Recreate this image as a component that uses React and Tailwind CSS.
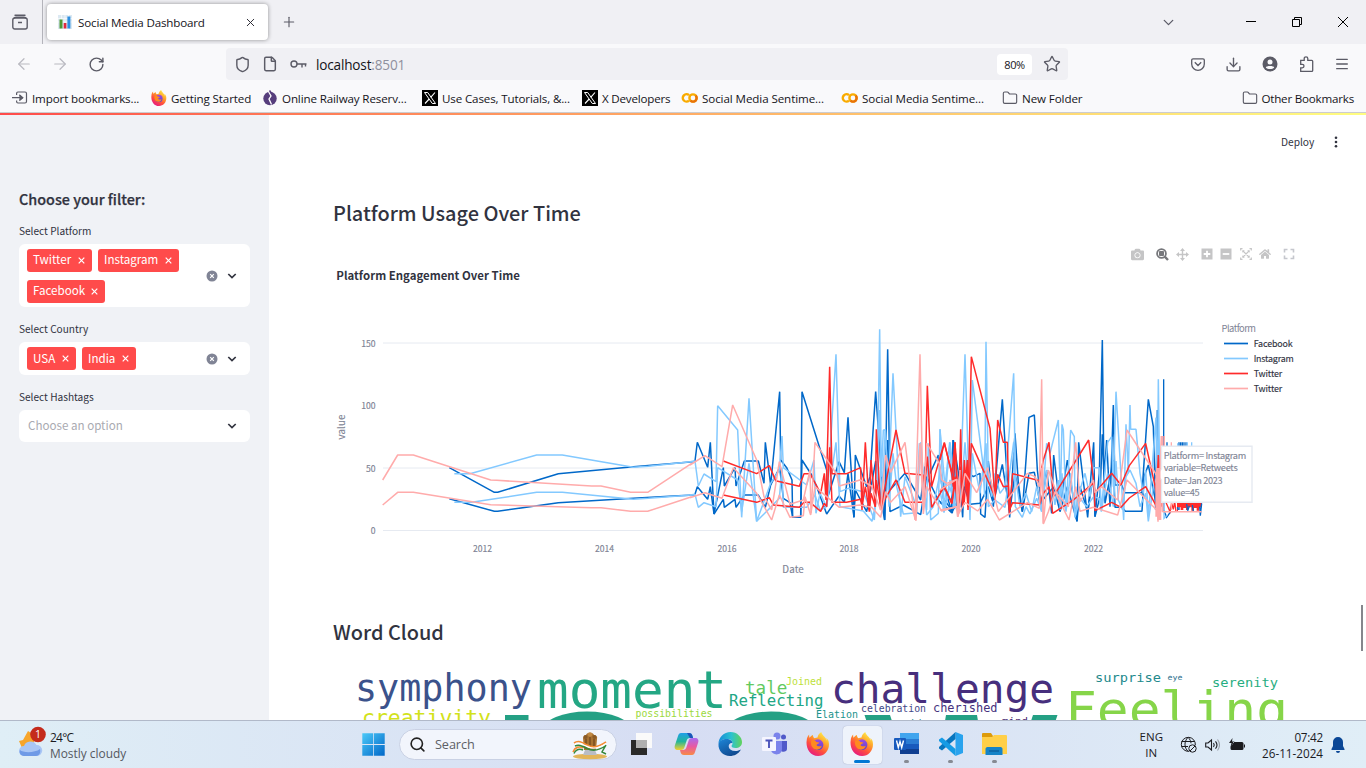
import React from "react";
import { Shield, File, Star, ChevronDown, ArrowLeft, ArrowRight, RotateCw, Plus, X, Folder, Menu, Download, Search } from "lucide-react";
import { FaCamera, FaHome } from "react-icons/fa";

const ui = "font-['Open_Sans','Noto_Sans',sans-serif]";
const st = "font-['Noto_Sans_CJK_SC','Source_Sans_3',sans-serif]";

function Firefox({ size }) {
  return (
    <svg width={size} height={size} viewBox="0 0 24 24" className="shrink-0">
      <defs>
        <linearGradient id="ffBody" x1="0.85" y1="0.05" x2="0.25" y2="1">
          <stop offset="0" stopColor="#fff44f" />
          <stop offset="0.35" stopColor="#ffa329" />
          <stop offset="0.65" stopColor="#ff4f3d" />
          <stop offset="1" stopColor="#e31587" />
        </linearGradient>
        <linearGradient id="ffCore" x1="0.5" y1="0" x2="0.5" y2="1">
          <stop offset="0" stopColor="#a04be0" />
          <stop offset="1" stopColor="#5a45c8" />
        </linearGradient>
      </defs>
      <path fill="url(#ffBody)" d="M22.6 9.2c-.5-1.300-1.600-2.700-2.400-3.100.7 1.300.9 2.200 1 3-1.300-3.300-3.600-4.600-5.400-7.500C15.500 1 15.400.500 15.300 0c-2.300 1.300-3.500 3.600-3.800 5.500-1 .1-2 .4-2.900.8C7.500 5.500 7 4.200 6.900 2.900 5.400 3.600 4.300 4.900 3.600 5.700c-.5-.7-.5-2.800-.4-3.300C1.600 3.800.8 6.100.7 8.400-.4 15 3.300 24 12.200 24 19 24 24.500 17.500 22.600 9.200z" />
      <circle cx="12" cy="12.700" r="5.400" fill="url(#ffCore)" />
      <path fill="#ff8a1f" d="M5.500 8.500c2.200-.9 4.200.3 4.800 1.400l3 .5c-.1 1.300-2.300 1.500-2.700 2.500.4 1.700 3.200 1.800 5.200.9-1 3.400-4.200 4.500-6.700 3.500C5.800 16 4.100 11.800 5.500 8.500z" />
    </svg>
  );
}

function XLogo() {
  return (
    <svg width="16" height="16" viewBox="0 0 16 16" className="shrink-0">
      <rect width="16" height="16" fill="#000" />
      <path d="M2.500 2.500h3.200l7.800 11h-3.200z" fill="none" stroke="#fff" strokeWidth="1" />
      <path d="M13 2.500 8.700 7.400M7.200 9 3 13.500" stroke="#fff" strokeWidth="1.100" />
    </svg>
  );
}

function Colab() {
  return (
    <svg width="17" height="12" viewBox="0 0 17 12" className="shrink-0">
      <path d="M8 3.200A3.700 3.700 0 1 0 8 8.600" fill="none" stroke="#f9ab00" strokeWidth="2.400" />
      <circle cx="12" cy="6" r="3.600" fill="none" stroke="#f9ab00" strokeWidth="2.400" />
      <path d="M9.500 8.600A3.600 3.600 0 0 0 14.600 3.500" fill="none" stroke="#e8710a" strokeWidth="2.400" />
    </svg>
  );
}

function ImportIcon() {
  return (
    <svg width="16" height="14" viewBox="0 0 16 14" fill="none" stroke="#5b5b66" strokeWidth="1.200" className="shrink-0">
      <path d="M4.600 4V2.500A1.500 1.500 0 0 1 6 1h7a1.500 1.500 0 0 1 1.500 1.500v8A1.500 1.500 0 0 1 13 12H6a1.500 1.500 0 0 1-1.400-1.500V9.500M0 6.700h10M7.500 4l3 2.700-3 2.700" />
      <path d="M8 4.500v4.400l2.700-2.200z" fill="#5b5b66" />
    </svg>
  );
}

function Railway() {
  return (
    <svg width="14" height="16" viewBox="0 0 14 16" className="shrink-0">
      <ellipse cx="7" cy="8.500" rx="6.700" ry="6.800" fill="#563d7c" />
      <path d="M5.500 1.500 8 6 6 9l2.500 5.500" stroke="#fff" strokeWidth="1.300" fill="none" />
      <path d="M6.500.500 8.700 3.500" stroke="#563d7c" strokeWidth="1.500" />
    </svg>
  );
}

function Bookmark({ icon, text, cls }) {
  return (
    <div className={"flex items-center gap-[4px] text-[11.600px] text-[#15141a] whitespace-nowrap " + cls}>
      {icon}
      <span>{text}</span>
    </div>
  );
}

const folderIcon = <Folder size={16} strokeWidth={1.7} color="#5b5b66" className="shrink-0" />;

function Chrome() {
  return (
    <header className={"text-[#15141a] " + ui}>
      <div className="flex h-11 items-center bg-[#f0f0f4]">
        <div className="flex h-11 w-[43px] items-center border-r border-[#b4b4bb] pl-3">
          <svg width="16" height="16" viewBox="0 0 16 16" fill="none" stroke="#5b5b66" strokeWidth="1.400">
            <path d="M3 1.200h10" strokeLinecap="round" />
            <rect x=".8" y="4" width="14.400" height="11" rx="2" />
            <path d="M2 4.500C2.300 3.400 3 3.200 4 3.200h8c1 0 1.700.2 2 1.300M6 8.500h4" />
          </svg>
        </div>
        <div className="ml-1 flex h-9 w-[221px] items-center rounded bg-white pl-[11px] shadow-[0_0_4px_rgba(0,0,0,0.4)]">
          <svg width="14" height="14" viewBox="0 0 14 14">
            <rect width="14" height="14" fill="#dce9f2" />
            <path d="M0 3.500h14M0 7h14M3.500 0v14M7 0v14M10.500 0v14" stroke="#fff" strokeWidth=".6" />
            <rect x="1.500" y="4.500" width="3" height="9" fill="#4f9a35" />
            <rect x="5.700" y="8" width="2.700" height="5.500" fill="#e0283c" />
            <rect x="9.400" y="1.500" width="3" height="12" fill="#2c8ee0" />
          </svg>
          <span className="mt-[2px] ml-[6px] w-[166px] text-[11.600px] tracking-[-0.170px]">Social Media Dashboard</span>
          <X size={13} strokeWidth={1.800} color="#2b2a33" />
        </div>
        <Plus size={16} strokeWidth={1.700} color="#5b5b66" className="ml-[13px]" />
        <ChevronDown size={17} strokeWidth={1.800} color="#5b5b66" className="ml-auto" />
        <svg width="10" height="10" viewBox="0 0 10 10" className="ml-[69px]"><path d="M0 4.500h10" stroke="#000" /></svg>
        <svg width="10" height="10" viewBox="0 0 10 10" className="ml-[36px]" fill="none" stroke="#000"><path d="M.5 2.500h7v7h-7zM2.500 2.500v-2h7v7h-2" /></svg>
        <svg width="10" height="10" viewBox="0 0 10 10" className="mr-[18px] ml-[36px]" stroke="#000"><path d="M0 0l10 10M10 0L0 10" /></svg>
      </div>
      <div className="flex h-10 items-center bg-[#f9f9fb]">
        <ArrowLeft size={18} strokeWidth={1.600} color="#b9b9c0" className="ml-[15px]" />
        <ArrowRight size={18} strokeWidth={1.600} color="#b9b9c0" className="ml-[18px]" />
        <RotateCw size={17} strokeWidth={2} color="#5b5b66" className="ml-[19px]" />
        <div className="ml-[121px] flex h-8 w-[842px] items-center rounded bg-[#f0f0f4]">
          <Shield size={17} strokeWidth={2} color="#5b5b66" className="ml-[8px]" />
          <File size={16} strokeWidth={2.200} color="#5b5b66" className="ml-[11px]" />
          <svg width="17" height="10" viewBox="0 0 17 10" fill="none" stroke="#5b5b66" strokeWidth="1.400" className="ml-[12px]">
            <circle cx="4" cy="5" r="3" /><path d="M7 5h9.500M12 5v3.500M15.500 5v2.500" />
          </svg>
          <span className="mt-[2px] ml-[9px] text-[13.600px] tracking-[-0.180px]">localhost<span className="text-[#8f8f9d]">:8501</span></span>
          <span className="ml-auto flex h-[21px] w-[35px] items-center justify-center rounded-sm bg-white pt-[2px] text-[11px] tracking-[-0.400px]">80%</span>
          <Star size={18} strokeWidth={1.800} color="#5b5b66" className="mr-[7px] ml-[11px]" />
        </div>
        <svg width="14" height="13" viewBox="0 0 14 13" fill="none" stroke="#5b5b66" strokeWidth="1.300" className="ml-auto">
          <path d="M2 .8h10a1.300 1.300 0 0 1 1.300 1.300V6A6.300 6.300 0 0 1 .7 6V2.100A1.300 1.300 0 0 1 2 .8zM3.800 4.300 7 7.500l3.200-3.200" />
        </svg>
        <Download size={17} strokeWidth={1.900} color="#5b5b66" className="ml-[20px]" />
        <svg width="16" height="16" viewBox="0 0 16 16" className="ml-[20px]">
          <circle cx="8" cy="8" r="7.500" fill="#5b5b66" /><circle cx="8" cy="6" r="2.500" fill="#f9f9fb" /><path d="M3.800 11.500c0-2 8.400-2 8.400 0-1.800 2-6.600 2-8.400 0z" fill="#f9f9fb" />
        </svg>
        <svg width="15" height="16" viewBox="0 0 15 16" fill="none" stroke="#5b5b66" strokeWidth="1.300" className="ml-[21px]">
          <path d="M1.700 4.300h3.500V2.600a1.800 1.800 0 0 1 3.600 0v1.700h4a.9.9 0 0 1 .9.900v9.200a.9.900 0 0 1-.9.900H1.700v-3.500h1.600a1.700 1.700 0 0 0 0-3.400H1.700z" />
        </svg>
        <Menu size={16} strokeWidth={1.900} color="#5b5b66" className="mr-[16px] ml-[20px]" />
      </div>
      <div className="flex h-7 items-center bg-[#f9f9fb] pt-px">
        <Bookmark icon={<ImportIcon />} text="Import bookmarks..." cls="ml-[12px] w-[139px] tracking-[-0.130px]" />
        <Bookmark icon={<Firefox size={16} />} text="Getting Started" cls="w-[112px] tracking-[-0.120px]" />
        <Bookmark icon={<Railway />} text="Online Railway Reserv..." cls="w-[159px] gap-[5px]! tracking-[-0.130px]" />
        <Bookmark icon={<XLogo />} text="Use Cases, Tutorials, &..." cls="w-[160px] tracking-[-0.140px]" />
        <Bookmark icon={<XLogo />} text="X Developers" cls="w-[99px] tracking-[-0.200px]" />
        <Bookmark icon={<Colab />} text="Social Media Sentime..." cls="w-[160px] tracking-[-0.090px]" />
        <Bookmark icon={<Colab />} text="Social Media Sentime..." cls="w-[161px] tracking-[-0.090px]" />
        <Bookmark icon={folderIcon} text="New Folder" cls="tracking-[-0.100px]" />
        <Bookmark icon={folderIcon} text="Other Bookmarks" cls="mr-[12px] ml-auto gap-[3px]! tracking-[-0.200px]" />
      </div>
      <div className="h-px bg-[#cccccf]" />
      <div className="h-[2px] bg-gradient-to-r from-[#ff4b4b] to-[#fffd80]" />
    </header>
  );
}

function Tag({ text, cls }) {
  return (
    <span className={"flex h-[23px] items-center justify-between rounded-[3px] bg-[#ff4b4b] pr-[7px] pl-[6px] text-[11.600px] text-white " + cls}>
      <span>{text}</span>
      <svg width="7" height="7" viewBox="0 0 7 7" stroke="#fff" strokeWidth="1.200"><path d="M.7.7l5.600 5.600M6.300.7.7 6.300" /></svg>
    </span>
  );
}

function Controls({ clear }) {
  return (
    <div className="ml-auto flex items-center gap-[9px] pr-[13px]">
      {clear && (
        <svg width="12" height="12" viewBox="0 0 12 12"><circle cx="6" cy="6" r="5.500" fill="#808495" /><path d="M4.200 4.200l3.600 3.600M7.800 4.200 4.200 7.800" stroke="#fff" strokeWidth="1.200" /></svg>
      )}
      <svg width="10" height="8" viewBox="0 0 10 8"><path d="M1.300 2 5 5.600 8.700 2" fill="none" stroke="#31333f" strokeWidth="1.700" /></svg>
    </div>
  );
}

function Sidebar() {
  return (
    <aside className={"w-[269px] shrink-0 bg-[#f0f2f6] pt-[73px] pr-[19px] pl-[19px] text-[#31333f] " + st}>
      <h2 className="h-[22px] text-[14.400px] leading-[22px] font-medium [-webkit-text-stroke:0.250px_#31333f]">Choose your filter:</h2>
      <div className="mt-[13px] h-[16px] text-[10.100px] leading-[16px]">Select Platform</div>
      <div className="mt-[5px] flex h-[63px] items-center rounded-md bg-white pl-[8px]">
        <div className="flex w-[160px] flex-wrap gap-x-[6px] gap-y-[8px]">
          <Tag text="Twitter" cls="w-[65px]" />
          <Tag text="Instagram" cls="w-[81px]" />
          <Tag text="Facebook" cls="w-[78px]" />
        </div>
        <Controls clear />
      </div>
      <div className="mt-[14px] h-[16px] text-[10.100px] leading-[16px]">Select Country</div>
      <div className="mt-[5px] flex h-[33px] items-center rounded-md bg-white pl-[8px]">
        <div className="flex gap-[6px]">
          <Tag text="USA" cls="w-[49px]" />
          <Tag text="India" cls="w-[54px]" />
        </div>
        <Controls clear />
      </div>
      <div className="mt-[14px] h-[16px] text-[10.100px] leading-[16px]">Select Hashtags</div>
      <div className="mt-[5px] flex h-[32px] items-center rounded-md bg-white pl-[9px]">
        <span className="text-[11.600px] text-[#a9aab1]">Choose an option</span>
        <Controls />
      </div>
    </aside>
  );
}

const C = { fb: "#0068c9", ig: "#83c9ff", tw: "#ff2b2b", tp: "#ffabab" };

const early = [
  [C.fb, "373,833 508,907 518,907 700,851 925,830 1105,815 1110,813"],
  [C.fb, "373,926 508,964 518,964 700,938 925,925 1060,917 1110,915"],
  [C.ig, "388,851 435,851 635,795 712,795 925,832 970,829 1110,814"],
  [C.ig, "388,937 440,937 635,907 712,907 925,928 970,925 1110,914"],
  [C.tp, "173,870 218,795 265,795 497,870 515,871 800,888 828,888 917,907 968,907 1100,820"],
  [C.tp, "173,945 218,907 265,907 497,944 800,953 828,953 917,964 968,964 1100,920"],
];

const middle = [
  [C.fb, "15,453 22,397 53,472 61,397 72,612 100,473 103,528 135,473 138,528 163,453 205,453 222,520 226,397 242,525 269,245 272,450 290,473 306,510 308,622 332,622 336,245 410,480 412,565 447,455 463,488 474,322 492,622 496,435 530,530 540,500 557,245 575,500 584,630 593,118 600,540 645,490 692,570 705,470 720,490 745,435 760,565 785,600 789,390 800,590"],
  [C.fb, "15,553 22,530 53,568 61,530 72,612 100,568 103,592 135,568 138,592 163,555 205,555 226,592 242,525 269,473 280,565 300,578 308,622 332,622 336,450 365,495 380,530 410,612 447,558 463,577 474,490 492,622 496,540 530,605 557,453 575,580 584,630 593,390 600,605 640,585 692,614 710,500 745,570 785,608 800,580"],
  [C.ig, "0,455 15,453 25,528 42,492 78,515 83,287 143,360 155,622 177,265 200,634 242,520 268,480 276,378 280,473 350,525 372,450 378,610 390,550 410,590 438,133 450,545 475,535 520,545 553,630 562,490 569,58 574,500 580,360 586,360 595,540 609,190 620,400 632,620 645,500 680,590 688,400 710,600 715,400 722,630 745,610 750,358 765,530 779,397 790,595 800,490"],
  [C.ig, "0,555 15,553 25,592 42,578 78,590 83,473 143,510 155,605 177,460 200,634 242,592 268,565 276,473 280,592 350,592 375,555 390,600 410,590 438,397 450,590 520,603 546,634 557,580 569,300 574,590 586,358 597,590 609,430 620,530 640,612 680,608 692,397 710,615 730,590 750,490 765,600 779,530 800,600"],
  [C.tw, "100,453 200,491 238,467 257,512 328,529 342,491 360,491 392,550 403,490 408,570 419,170 426,491 470,491 512,473 516,600 526,397 538,600 543,450 556,590 559,358 572,600 618,360 645,490 700,495 705,530 712,227 725,530 763,397 785,490 790,530 795,397 805,600"],
  [C.tw, "100,555 200,577 238,563 250,585 328,592 342,577 360,577 392,604 403,580 410,590 419,412 426,577 470,577 512,568 516,590 526,530 538,605 543,550 556,590 559,510 572,590 618,510 645,577 700,577 712,440 725,592 763,530 785,580 795,520 805,590"],
  [C.tp, "0,465 45,437 96,470 128,285 200,450 222,560 245,600 268,455 300,583 340,570 360,480 363,610 375,397 440,492 448,528 510,510 545,528 572,600 587,435 602,487 645,397 675,630 690,133 700,600 710,400 748,460 755,510 770,520 800,508 803,620 810,480"],
  [C.tp, "0,563 45,548 96,565 130,473 200,550 245,630 268,555 300,622 340,617 345,560 362,615 375,530 448,592 510,585 545,592 572,622 587,545 602,577 645,530 678,632 690,400 700,612 710,530 755,603 800,590 803,620 810,580"],
];

const late = [
  [C.fb, "0,490 37,610 40,390 60,520 68,622 73,480 100,500 120,490 122,612 135,622 145,453 160,590 187,268 200,480 209,622 225,370 235,520 247,605 267,322 283,315 292,480 305,590 320,480 335,610 341,435 360,590 382,450 411,634 416,397 443,622 461,397 465,620 478,490 487,90 492,510 500,390 510,590 520,285 525,525 545,525 554,548 606,548 625,268 640,350 647,600 652,300 656,590"],
  [C.fb, "0,577 37,605 42,490 60,590 73,530 90,583 120,580 145,530 160,580 187,463 209,605 225,490 247,605 267,490 283,487 300,580 341,530 360,605 382,530 411,634 420,530 443,605 461,490 465,620 480,560 487,373 495,580 520,450 525,592 548,592 556,604 606,604 612,500 625,465 650,590"],
  [C.ig, "0,358 12,600 30,397 45,530 60,560 75,133 90,630 97,210 128,455 134,560 138,95 145,500 155,560 165,490 180,550 195,530 221,190 226,500 240,590 258,550 275,605 290,530 305,600 320,400 330,430 355,330 361,570 366,343 370,360 378,600 392,360 403,380 405,622 420,540 435,490 450,560 461,473 478,473 484,600 503,397 515,380 520,530 528,245 551,630 558,343 565,490 570,285 572,358 588,358 600,490 610,550 617,480 625,620 648,323 652,600 655,208 660,580"],
  [C.ig, "0,540 12,608 30,510 45,590 60,592 75,397 90,605 97,430 120,550 138,400 145,590 165,570 195,592 221,397 226,590 247,622 258,590 270,612 290,565 305,605 320,480 330,490 345,585 355,510 361,600 366,490 370,570 378,605 392,490 405,622 420,565 440,590 461,560 478,565 484,605 503,490 520,590 528,453 535,570 548,600 558,500 570,480 588,520 600,590 617,550 625,634 640,530 655,490 660,605"],
  [C.tw, "0,450 13,400 36,490 45,397 56,600 62,358 67,590 73,450 84,590 94,140 150,355 165,570 173,330 190,397 202,397 208,610 218,491 298,512 310,450 327,397 340,560 446,390 465,548 515,490 543,525 568,467 617,400 650,550 655,435 665,580"],
  [C.tw, "0,545 13,530 36,580 45,500 56,605 62,470 72,585 82,450 84,600 94,400 165,560 173,493 190,530 205,528 208,600 218,578 298,585 310,550 327,530 338,610 400,570 462,518 465,602 515,577 543,592 568,564 617,530 650,590 655,530 665,590"],
  [C.tp, "0,540 50,508 54,620 75,490 110,548 143,473 175,605 262,490 285,500 298,530 305,208 310,640 325,480 350,550 385,590 407,397 420,575 460,510 465,548 485,530 533,570 561,360 650,495 654,635 664,378 667,605"],
  [C.tp, "0,600 50,590 54,615 75,577 113,603 143,568 178,630 262,578 298,595 305,473 310,642 325,605 345,545 387,630 407,530 420,604 460,592 533,615 561,510 650,600 654,620 664,473 668,605 785,605"],
];

function Lines({ rows, tr, w = 4.5 }) {
  return (
    <g transform={tr} fill="none" strokeWidth={w} strokeLinejoin="bevel">
      {rows.map(([c, p], i) => <polyline key={i} points={p} stroke={c} />)}
    </g>
  );
}

function Chart() {
  const years = [["2012", 482.5], ["2014", 604.5], ["2016", 727], ["2018", 849], ["2020", 971], ["2022", 1093.5]];
  const legend = [["Facebook", C.fb, 39], ["Instagram", C.ig, 40], ["Twitter", C.tw, 28.5], ["Twitter", C.tp, 28.5]];
  const tip = [["Platform= Instagram", 82.5], ["variable=Retweets", 74], ["Date=Jan 2023", 59], ["value=45", 36]];
  return (
    <svg width="970" height="321" viewBox="333 264 970 321" className={"block " + st}>
      <text x="336.300" y="279.500" fontSize="11.400" fontWeight="700" fill="#31333f" textLength="183.500">Platform Engagement Over Time</text>
      {[[150, 343], [100, 405.500], [50, 468], [0, 530.500]].map(([v, y]) => (
        <g key={v}>
          {v !== 100 && <path d={`M383 ${y}H1203`} stroke="#e6eaf1" />}
          <text x="375.500" y={y + 3.500} textAnchor="end" fontSize="8.600" fill="#808495" stroke="#808495" strokeWidth=".15">{v}</text>
        </g>
      ))}
      {years.map(([t, x]) => <text key={t} x={x} y="552" textAnchor="middle" fontSize="8.600" fill="#808495" stroke="#808495" strokeWidth=".15" textLength="19">{t}</text>)}
      <text x="793" y="573.300" textAnchor="middle" fontSize="9.800" fill="#808495" stroke="#808495" strokeWidth=".15" textLength="21.500">Date</text>
      <text transform="translate(345 427) rotate(-90)" textAnchor="middle" fontSize="9.800" fill="#808495" stroke="#808495" strokeWidth=".15" textLength="25">value</text>
      <Lines rows={early} tr="translate(325 190) scale(.33333)" />
      <Lines rows={middle.slice(0, 2)} tr="translate(690 310) scale(.33333)" />
      <Lines rows={late.slice(0, 2)} tr="translate(940 310) scale(.33333)" />
      <Lines rows={middle.slice(2, 4)} tr="translate(690 310) scale(.33333)" />
      <Lines rows={late.slice(2, 4)} tr="translate(940 310) scale(.33333)" />
      <Lines rows={middle.slice(4, 6)} tr="translate(690 310) scale(.33333)" />
      <Lines rows={late.slice(4, 6)} tr="translate(940 310) scale(.33333)" />
      <g transform="translate(940 310) scale(.33333)" fill="none" strokeWidth="4">
        <path d="M671 208V600L680 622 692 605M681 397V480M717 397V600M722 397V500M727 397V600M732 397V590M738 397V500" stroke={C.fb} />
        <path d="M672 570V625L682 615M713 400V590M742 397V500M755 397V520M690 590V605" stroke={C.ig} />
        <path d="M664 545 690 605 695 580 700 598 704 575 708 605" stroke={C.tw} />
        <path d="M711 570V604H714V592H722V600H730V594H738V600H745V592H754V602H762V594H770V602H777V592H786V570z" stroke="none" fill={C.tw} />
        <path d="M712 592 715 600M740 582 743 602 748 588M757 585 760 604M779 590 781 617 785 580" stroke={C.fb} />
      </g>
      <Lines rows={middle.slice(6)} tr="translate(690 310) scale(.33333)" />
      <Lines rows={late.slice(6)} tr="translate(940 310) scale(.33333)" />
      <g transform="translate(940 310) scale(.33333)" fill="none" stroke={C.tp}>
        <path d="M652 490V620M658 500V630" strokeWidth="12" />
        <path d="M668 378V600M694 397V600M673 378V500" strokeWidth="4" />
      </g>
      <text x="1221.500" y="331.500" fontSize="9.400" fill="#808495" textLength="34.500">Platform</text>
      {legend.map(([t, c, w], i) => (
        <g key={i}>
          <path d={`M1224 ${343.500 + i * 15}h24`} stroke={c} strokeWidth="1.700" />
          <text x="1253.700" y={347.300 + i * 15} fontSize="8.900" fill="#31333f" stroke="#31333f" strokeWidth=".15" textLength={w}>{t}</text>
        </g>
      ))}
      <path d="M1156.500 474.500 1161.500 469V446.200H1252V502.300H1161.500V480z" fill="#fff" stroke="#e6eaf1" strokeWidth="1.400" />
      <path d="M1156 468h4.500v42h-4.500z" fill={C.tp} />
      {tip.map(([t, w], i) => <text key={t} x="1163.700" y={458.500 + i * 12.600} fontSize="9.200" fill="#808495" stroke="#808495" strokeWidth=".12" textLength={w}>{t}</text>)}
    </svg>
  );
}

function ModeBar() {
  const g = "#c5c5c6";
  return (
    <div className="flex h-4 items-center pl-[798px]">
      <FaCamera size={13} color={g} />
      <svg width="13" height="13" viewBox="0 0 13 13" className="ml-[12px]" fill="none" stroke="#76777b">
        <circle cx="5.500" cy="5.500" r="4.400" strokeWidth="1.800" /><path d="M8.700 8.700 12 12" strokeWidth="2.400" /><path d="M3.500 3.500h4v4h-4z" fill="#76777b" />
      </svg>
      <svg width="13" height="13" viewBox="0 0 13 13" className="ml-[7px]" fill={g}>
        <path d="M6.500 0 9 3H7.200v2.800H10V4l3 2.500L10 9V7.200H7.200V10H9l-2.500 3L4 10h1.800V7.200H3V9L0 6.500 3 4v1.800h2.800V3H4z" />
      </svg>
      <svg width="12" height="12" viewBox="0 0 12 12" className="ml-[12px]"><path fill={g} d="M.5.5h11v11H.5z" /><path d="M6 2.700v6.600M2.700 6h6.600" stroke="#fff" strokeWidth="1.800" /></svg>
      <svg width="12" height="12" viewBox="0 0 12 12" className="ml-[7px]"><path fill={g} d="M.5.5h11v11H.5z" /><path d="M2.700 6h6.600" stroke="#fff" strokeWidth="1.800" /></svg>
      <svg width="12" height="12" viewBox="0 0 12 12" className="ml-[8px]" fill="none" stroke={g} strokeWidth="1.200">
        <path d="M.7 2.500V.7h1.800M9.500.7h1.800v1.800M11.300 9.500v1.800H9.500M2.500 11.300H.7V9.500M3 3l6 6M9 3 3 9" /><path d="M2.300 2.300h2.500L2.300 4.800zM9.700 2.300v2.500L7.200 2.300zM9.700 9.700H7.200l2.500-2.500zM2.300 9.700V7.200l2.500 2.500z" fill={g} stroke="none" />
      </svg>
      <FaHome size={12} color={g} className="ml-[7px]" />
      <svg width="12" height="12" viewBox="0 0 12 12" className="ml-[12px]" fill="none" stroke="#c5c7cd" strokeWidth="1.600">
        <path d="M1.500 4.500v-3h3M7.500 1.500h3v3M10.500 7.500v3h-3M4.500 10.500h-3v-3" />
      </svg>
    </div>
  );
}

function WordCloud() {
  const words = [
    ["symphony", 355, 701, 177, 36.500, "#3b528b"],
    ["moment", 537, 708, 190, 52, "#24a784"],
    ["tale", 745, 694, 42.500, 17.500, "#62ca5f"],
    ["Joined", 786, 684.500, 36, 10, "#bddf38"],
    ["Reflecting", 729, 706, 94.500, 15.500, "#21a685"],
    ["challenge", 831, 703, 223, 40.500, "#472f7d"],
    ["surprise", 1095, 682, 66, 12.700, "#238a8d"],
    ["eye", 1167.500, 680, 15, 7.500, "#2c718e"],
    ["serenity", 1212, 687, 66, 13, "#27ad81"],
    ["Feeling", 1065, 727, 223, 50, "#86d549"],
    ["creativity", 362, 725, 129, 21, "#d2e21b"],
    ["possibilities", 635.500, 716.500, 77, 9.800, "#9bd93c"],
    ["Elation", 816, 717.500, 42, 10, "#20938c"],
    ["celebration", 861, 711.500, 65, 10, "#3f4788"],
    ["cherished", 933, 711.500, 64.500, 11.500, "#46327e"],
    ["making", 899, 726, 36, 9.500, "#23898e"],
    ["mind", 1002, 725, 26, 10.500, "#481f70"],
  ];
  return (
    <svg width="970" height="60" viewBox="333 660 970 60" className="block overflow-hidden font-['DejaVu_Sans_Mono',monospace]">
      <g fill="#24a084">
        <path d="M505 715h23.500v6H505zM864.500 715H890l2 6h-25.500zM946 715h31l1 6h-33zM1033 715h24.500l-2 6H1031z" />
        <ellipse cx="587" cy="730" rx="44" ry="18.500" /><ellipse cx="771" cy="730" rx="44" ry="18.500" />
      </g>
      {words.map(([t, x, y, w, s, c]) => (
        <text key={t} x={x} y={y} fontSize={s} fill={c} textLength={w} lengthAdjust="spacingAndGlyphs">{t}</text>
      ))}
    </svg>
  );
}

function Page() {
  return (
    <main className={"flex min-w-0 flex-1 bg-white text-[#31333f] " + st}>
      <div className="w-[1090px] pl-[64px]">
        <div className="flex h-[54px] items-center justify-end text-[10.200px]">
          <span className="w-[33px] whitespace-nowrap">Deploy</span>
          <svg width="4" height="12" viewBox="0 0 4 12" className="mr-[21px] ml-[20px]" fill="#31333f"><circle cx="2" cy="1.700" r="1.300" /><circle cx="2" cy="6" r="1.300" /><circle cx="2" cy="10.300" r="1.300" /></svg>
        </div>
        <h3 className="mt-[28px] h-[32px] text-[19.900px] leading-[32px] font-medium">Platform Usage Over Time</h3>
        <div className="mt-[17px]"><ModeBar /></div>
        <div className="mt-[2px]"><Chart /></div>
        <h3 className="mt-[31px] h-[32px] text-[19.900px] leading-[32px] font-medium">Word Cloud</h3>
        <div className="mt-[12px]"><WordCloud /></div>
      </div>
      <div className="mt-[490px] mr-[3px] ml-auto h-[46px] w-[2px] bg-[#85868c]" />
    </main>
  );
}

function Slot({ children, active, run }) {
  return (
    <div className="flex h-12 w-11 items-center justify-center">
      <div className={"flex h-[38px] w-[39px] flex-col items-center rounded pt-[6px] " + (active ? "bg-[#eef3fb] shadow-[0_0_1px_rgba(80,90,120,.5)]" : "")}>
        <div className="flex h-6 items-center">{children}</div>
        <div className={"mt-[4px] rounded-full " + (active ? "h-[3px] w-4 bg-[#0078d4]" : run ? "h-[3px] w-[5px] bg-[#868a93]" : "h-[3px]")} />
      </div>
    </div>
  );
}

function Taskbar() {
  return (
    <footer className={"flex h-12 items-center border-t border-[#b1b9c9] bg-gradient-to-r from-[#dfeef6] via-[#d6ddf3] to-[#e0eef7] text-[#1b1b1f] " + ui}>
      <div className="flex w-[362px] items-center pl-[17px]">
        <svg width="32" height="34" viewBox="0 0 32 34" className="-mt-[3px]">
          <path d="M11 5 6 14l-4 1 3 7h12V9z" fill="#f7a52b" />
          <path d="M7 30a5 5 0 0 1 0-10 7 7 0 0 1 12.500-1A5.500 5.500 0 0 1 20 30z" fill="#a9c6f5" />
          <path d="M7 30c-4 0-5-4-4-6 3 3 15 3 20-1 1 4-1 7-4 7z" fill="#6f9ae6" />
          <circle cx="21" cy="8.500" r="7.800" fill="#c42b1c" />
          <text x="21" y="12.300" textAnchor="middle" fontSize="10.500" fill="#fff">1</text>
        </svg>
        <div className="ml-[1px] text-[11.900px] leading-[16px]">
          <div className="tracking-[-0.700px]">24°C</div>
          <div className="text-[#55585f]">Mostly cloudy</div>
        </div>
      </div>
      <svg width="23" height="23" viewBox="0 0 24 24">
        <defs><linearGradient id="win" x1="0" y1="0" x2="1" y2="1"><stop stopColor="#4cc9f8" /><stop offset="1" stopColor="#0067c8" /></linearGradient></defs>
        <path fill="url(#win)" d="M.3.300h11.300v11.300H.3zM12.400.300h11.300v11.300H12.400zM.3 12.400h11.300v11.300H.3zM12.400 12.400h11.300v11.300H12.400z" />
      </svg>
      <div className="ml-[14px] flex h-[31px] w-[218px] items-center rounded-full border border-[#c9d1e4] bg-[#f2f5fc] pl-[9px]">
        <Search size={17} strokeWidth={2.300} color="#222" />
        <span className="ml-[9px] text-[12.700px] tracking-[-0.100px] text-[#5d5f66]">Search</span>
        <svg width="38" height="30" viewBox="0 0 38 30" className="mr-[7px] ml-auto">
          <ellipse cx="19" cy="26.500" rx="17" ry="2.800" fill="#e2b55a" />
          <path d="M14 20h10l2 5H12z" fill="#b9bdc6" />
          <path d="M12 8c0-2 2-3 3-3 1-3 7-3 8 0 1 0 4 1 3 4l-1 11H13z" fill="#a87231" />
          <path d="M15 9v10M19 7v13M23 9v10" stroke="#71451d" strokeWidth="1.200" />
          <circle cx="14.500" cy="7" r="2" fill="#8a5a26" /><circle cx="23.500" cy="7" r="2" fill="#8a5a26" /><circle cx="19" cy="4.500" r="2.300" fill="#c28a43" />
          <path d="M3 13c4-3 8-1 13 2s12 2 19-3M2 22c2-5 6-6 10-4" fill="none" stroke="#f58b33" strokeWidth="1.600" />
          <path d="M4 14.500c4-2 7-.5 12 2s12 2 19-3" fill="none" stroke="#fff" strokeWidth="1.400" />
          <path d="M4 16c4-2 7 0 12 2.500s12 2 19-3M3 23.500c2-4 5-5 9-3.500M35 15l-4 7 4 2" fill="none" stroke="#36883c" strokeWidth="1.500" />
        </svg>
      </div>
      <div className="ml-[3px] flex">
        <Slot>
          <svg width="22" height="24" viewBox="0 0 22 24"><path fill="#2a2a2a" d="M0 8h16v15H0z" /><path fill="#fafafa" d="M5 1h16v15H5z" /><path fill="#b0b0b0" d="M5 8h11v8H5z" /></svg>
        </Slot>
        <Slot>
          <svg width="25" height="24" viewBox="0 0 25 24">
            <defs>
              <linearGradient id="cpA" x1="0" y1="0" x2="0" y2="1"><stop stopColor="#1f9ee8" /><stop offset=".5" stopColor="#22b69a" /><stop offset="1" stopColor="#f4cf31" /></linearGradient>
              <linearGradient id="cpB" x1="0" y1="0" x2="0" y2="1"><stop stopColor="#a76bf0" /><stop offset=".5" stopColor="#e85aa2" /><stop offset="1" stopColor="#f88a45" /></linearGradient>
            </defs>
            <path d="M7 1h8c2 0 3 1 3.500 3l.5 2h-3c-2 0-3 1-3.500 3l-2 6c-.5 2-1.500 3-3.500 3H4C1 18 0 16 1 13L4 4c.5-2 1.500-3 3-3z" fill="url(#cpA)" />
            <path d="M18 23h-8c-2 0-3-1-3.500-3L6 18h3c2 0 3-1 3.500-3l2-6c.5-2 1.500-3 3.500-3h3c3 0 4 2 3 5l-3 9c-.5 2-1.500 3-3 3z" fill="url(#cpB)" />
            <path d="M13 1h2c2 0 3 1 3.500 3l.5 2h-3z" fill="#1c55b8" />
          </svg>
        </Slot>
        <Slot>
          <svg width="24" height="24" viewBox="0 0 24 24">
            <defs>
              <linearGradient id="edA" x1="0" y1=".3" x2="1" y2=".3"><stop stopColor="#168bd8" /><stop offset=".55" stopColor="#2cc2cf" /><stop offset="1" stopColor="#61d35a" /></linearGradient>
              <linearGradient id="edB" x1="0" y1="0" x2=".6" y2="1"><stop stopColor="#1d86d8" /><stop offset="1" stopColor="#10498f" /></linearGradient>
            </defs>
            <path d="M.5 12C.5 5 6 0 12.500 0S24 5 24 10c0 4-3 6-6.500 6-2.500 0-4-1-4-2 0-.7 1-1.200 1-3C14.500 8.500 12 7 9 7 4 7 .8 10 .5 12z" fill="url(#edA)" />
            <path d="M.5 12C.8 9.500 4 7 8.500 7c3.500 0 6 2 6 4-5-1-6 8 3 8 2 0 4-.7 5.500-1.500C20.500 22 16 24 12 24 5 24 0 18.500.5 12z" fill="url(#edB)" />
          </svg>
        </Slot>
        <Slot>
          <svg width="25" height="24" viewBox="0 0 25 24">
            <circle cx="15" cy="4" r="3.500" fill="#7b83eb" /><circle cx="21.500" cy="5" r="2.500" fill="#5059c9" />
            <path d="M18 9h7v8c0 3-5 4-7 1z" fill="#5059c9" /><path d="M9 9h11v8c0 7-10 7-11 1z" fill="#7b83eb" />
            <rect x="0" y="5" width="14" height="14" rx="1" fill="#f5f5ff" /><path d="M3.500 8.500h7M7 8.500V16" stroke="#4b53bc" strokeWidth="1.900" />
          </svg>
        </Slot>
        <Slot><Firefox size={24} /></Slot>
        <Slot active><Firefox size={24} /></Slot>
        <Slot run>
          <svg width="25" height="24" viewBox="0 0 25 24">
            <path d="M6 1h19v6H6z" fill="#41a5ee" /><path d="M6 7h19v5H6z" fill="#2b7cd3" /><path d="M6 12h19v5H6z" fill="#185abd" /><path d="M6 17h19v5H6z" fill="#103f91" />
            <rect y="6" width="12" height="12" rx="1" fill="#185abd" /><path d="M2.500 8.500 4.300 15.500 6 9.500 7.700 15.500 9.500 8.500" fill="none" stroke="#fff" strokeWidth="1.400" />
          </svg>
        </Slot>
        <Slot run>
          <svg width="25" height="24" viewBox="0 0 25 24"><path d="M17.500 0 25 3v18l-7.500 3z" fill="#29a3ee" /><path d="M17.500 0v7L4 18.500 1 16.500V15z" fill="#0876bf" /><path d="M17.500 24v-7L4 5.500 1 7.500V9z" fill="#159be5" /></svg>
        </Slot>
        <Slot run>
          <svg width="25" height="24" viewBox="0 0 25 24"><path d="M0 2a1 1 0 0 1 1-1h8l2 3h13v8H0z" fill="#dd9b0b" /><path d="M0 5h10l2-2h12a1 1 0 0 1 1 1v18H0z" fill="#ffcf48" /><path d="M3.500 23v-6c0-1 .7-2 2-2h13c1.300 0 2 1 2 2v6z" fill="#1583c7" /><path d="M7 19h10" stroke="#0c62a1" strokeWidth="1.500" /></svg>
        </Slot>
      </div>
      <div className="ml-auto text-center text-[11.500px] leading-[16px]"><div>ENG</div><div>IN</div></div>
      <svg width="17" height="17" viewBox="0 0 17 17" fill="none" stroke="#1b1b1f" strokeWidth="1" className="ml-[17px]">
        <path d="M9 15.300A7 7 0 1 1 15.300 9M8 1.300C3.500 6 4.500 12 8 15.300M8 1.300c2 2 3 4 3 6M1.500 5.500h13M1.500 10.500H8" /><circle cx="12.500" cy="12.500" r="3.700" /><path d="M10 15l5-5" />
      </svg>
      <svg width="15" height="14" viewBox="0 0 15 14" fill="none" stroke="#1b1b1f" strokeWidth="1.100" className="ml-[8px]">
        <path d="M.7 5v4H3l3.500 3V2L3 5zM8.500 5q1.500 2 0 4M10.500 3.300q3 3.700 0 7.400" /><path d="M12.500 1.500q4 5.500 0 11" stroke="#9aa1aa" />
      </svg>
      <svg width="17" height="14" viewBox="0 0 17 14" className="ml-[8px]" fill="#1b1b1f"><path d="M5 4h9a1.500 1.500 0 0 1 1.500 1.500v5A1.500 1.500 0 0 1 14 12H4a1.500 1.500 0 0 1-1.500-1.500V8L5 6zM16 6.500h1v3h-1zM4.500 0 1 5h2.500L2.500 8.500 6.500 3.500H4z" /></svg>
      <div className="ml-[16px] w-[62px] text-right text-[11.700px] leading-[16px] whitespace-nowrap"><div className="tracking-[-0.250px]">07:42</div><div>26-11-2024</div></div>
      <svg width="14" height="16" viewBox="0 0 14 16" className="mr-[21px] ml-[8px]" fill="#0a4796"><path d="M7 0a5 5 0 0 0-5 5v4L.5 12v1h13v-1L12 9V5a5 5 0 0 0-5-5zM5 14a2 2 0 0 0 4 0z" /></svg>
    </footer>
  );
}

export default function App() {
  return (
    <div className="flex h-[768px] w-[1366px] flex-col overflow-hidden bg-white">
      <Chrome />
      <div className="flex min-h-0 flex-1 overflow-hidden">
        <Sidebar />
        <Page />
      </div>
      <Taskbar />
    </div>
  );
}
